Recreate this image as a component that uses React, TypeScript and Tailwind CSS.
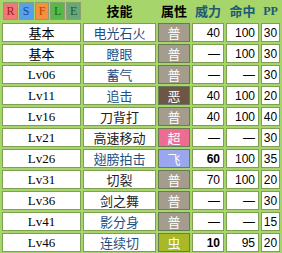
const moves = [
  { lv: '基本', name: '电光石火', link: true, type: '普', power: '40', acc: '100', pp: '30' },
  { lv: '基本', name: '瞪眼', link: true, type: '普', power: '—', acc: '100', pp: '30' },
  { lv: 'Lv06', name: '蓄气', link: true, type: '普', power: '—', acc: '—', pp: '30' },
  { lv: 'Lv11', name: '追击', link: true, type: '恶', power: '40', acc: '100', pp: '20' },
  { lv: 'Lv16', name: '刀背打', link: false, type: '普', power: '40', acc: '100', pp: '40' },
  { lv: 'Lv21', name: '高速移动', link: false, type: '超', power: '—', acc: '—', pp: '30' },
  { lv: 'Lv26', name: '翅膀拍击', link: true, type: '飞', power: '60', acc: '100', pp: '35', bold: true },
  { lv: 'Lv31', name: '切裂', link: false, type: '普', power: '70', acc: '100', pp: '20' },
  { lv: 'Lv36', name: '剑之舞', link: false, type: '普', power: '—', acc: '—', pp: '30' },
  { lv: 'Lv41', name: '影分身', link: true, type: '普', power: '—', acc: '—', pp: '15' },
  { lv: 'Lv46', name: '连续切', link: true, type: '虫', power: '10', acc: '95', pp: '20', bold: true },
];

const typeBg: Record<string, string> = {
  '普': 'bg-[#a49c8c]',
  '恶': 'bg-[#6e5646]',
  '超': 'bg-[#ec6c94]',
  '飞': 'bg-[#9aa6ee]',
  '虫': 'bg-[#a8b826]',
};

const tabs = [
  { k: 'R', bg: 'bg-[#f07878]', fg: 'text-[#a01818]' },
  { k: 'S', bg: 'bg-[#58a0e8]', fg: 'text-[#1848a0]' },
  { k: 'F', bg: 'bg-[#f49040]', fg: 'text-[#b04800]' },
  { k: 'L', bg: 'bg-[#58b848]', fg: 'text-[#1e6818]' },
  { k: 'E', bg: 'bg-[#68a878]', fg: 'text-[#205830]' },
];

const cell = 'bg-white border border-[#7f9f52] h-[19px] flex items-center leading-none';
const cjk = "font-['Noto_Sans_CJK_SC',sans-serif]";

export default function App() {
  return (
    <div className="w-[282px] h-[253px] bg-[#a6d56c] overflow-hidden">
      <div className="grid grid-cols-[79px_73px_32px_32px_33px_19px] gap-[2px] pl-[2px]">
        {/* header */}
        <div className="h-[21px] flex items-center gap-[1px] pt-[1px] pl-[1px]">
          {tabs.map((t) => (
            <div
              key={t.k}
              className={`${t.bg} ${t.fg} w-[15px] h-[18px] flex items-center justify-center border border-[#8aa070] font-['Liberation_Serif',serif] text-[12px] leading-none`}
            >
              {t.k}
            </div>
          ))}
        </div>
        <div className={`h-[21px] flex items-center justify-center font-bold text-[13px] leading-none text-black ${cjk}`}>技能</div>
        <div className={`h-[21px] flex items-center justify-center font-bold text-[13px] leading-none text-black ${cjk}`}>属性</div>
        <div className={`h-[21px] flex items-center justify-center font-bold text-[13px] leading-none text-[#1d5a76] ${cjk}`}>威力</div>
        <div className={`h-[21px] flex items-center justify-center font-bold text-[13px] leading-none text-[#1d5a76] ${cjk}`}>命中</div>
        <div className="h-[21px] flex items-center justify-center font-bold text-[12px] leading-none text-[#1d5a76] font-['Liberation_Serif',serif]">PP</div>

        {moves.map((m, i) => (
          <div key={i} className="contents">
            <div className={`${cell} justify-center text-[13px] text-black ${m.lv === '基本' ? cjk : "font-['Liberation_Serif',serif]"}`}>
              {m.lv}
            </div>
            <div className={`${cell} justify-center text-[13px] ${cjk} ${m.link ? 'text-[#1f4f7f]' : 'text-[#222]'}`}>
              {m.name}
            </div>
            <div className={`h-[19px] flex items-center justify-center leading-none border border-[#6b7a50] text-white text-[13px] ${cjk} ${typeBg[m.type]}`}>
              {m.type}
            </div>
            <div className={`${cell} justify-end pr-[3px] text-[12px] text-black font-['Liberation_Sans',sans-serif] ${m.bold ? 'font-bold' : ''}`}>
              {m.power}
            </div>
            <div className={`${cell} justify-end pr-[3px] text-[12px] text-black font-['Liberation_Sans',sans-serif]`}>
              {m.acc}
            </div>
            <div className={`${cell} justify-center text-[12px] text-black font-['Liberation_Sans',sans-serif]`}>
              {m.pp}
            </div>
          </div>
        ))}
      </div>
    </div>
  );
}
